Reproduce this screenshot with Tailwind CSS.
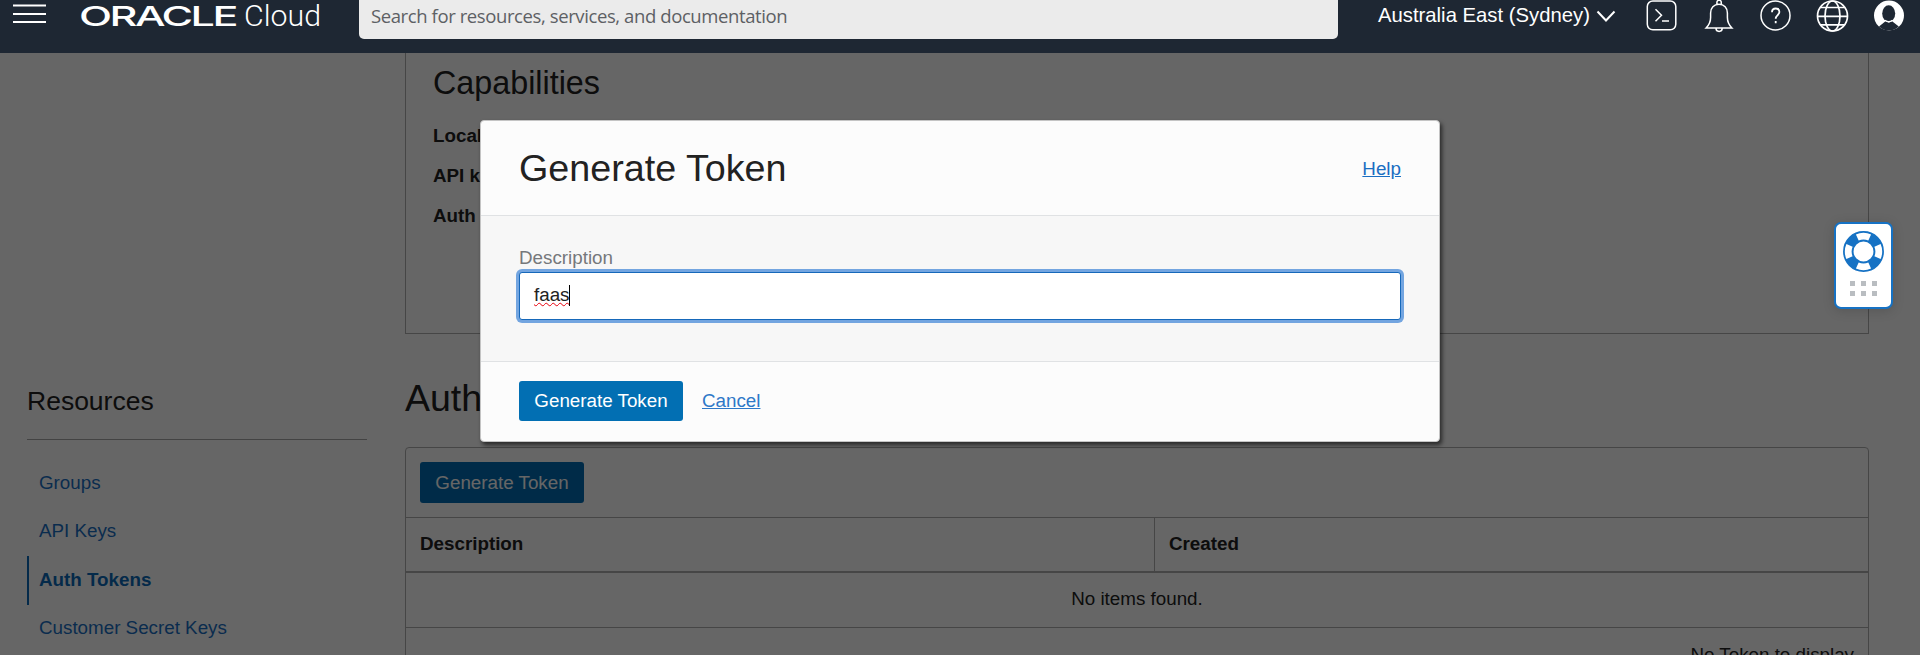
<!DOCTYPE html>
<html lang="en">
<head>
<meta charset="utf-8">
<title>Oracle Cloud</title>
<script src="https://cdn.jsdelivr.net/npm/@tailwindcss/browser@4"></script>
</head>
<body class="relative h-[655px] overflow-hidden bg-white font-['Liberation_Sans',Arial,sans-serif] text-[18.8px] text-[#222] whitespace-nowrap">

<header class="relative z-20 flex h-[53px] bg-[#1e2733] text-white">
  <svg class="mt-[4px] ml-[13px] h-[20px] w-[33px]" viewBox="0 0 33 20" stroke="#fff" stroke-width="1.8"><path d="M0 1.5h33M0 10h33M0 18h33"/></svg>
  <svg class="ml-[34px] h-[32px] w-[242px]" viewBox="0 0 242 32" fill="#fff">
    <text x="-1" y="25.500" font-family="Inter, sans-serif" font-weight="500" font-size="27.500" letter-spacing="-1.6" textLength="157" lengthAdjust="spacingAndGlyphs">ORACLE</text>
    <text x="164" y="25.500" font-family="Roboto, sans-serif" font-weight="300" font-size="29" textLength="77" lengthAdjust="spacingAndGlyphs">Cloud</text>
  </svg>
  <div class="ml-[37px] h-[39px] w-[979px] rounded-b-[5px] bg-[#ebebeb] pl-[12px] font-['Open_Sans',sans-serif] text-[18.5px] leading-[32px] tracking-[-0.4px] text-[#5d6064]">Search for resources, services, and documentation</div>
  <div class="ml-[40px] flex w-[238px] items-start text-[20.3px] leading-[31px]">
    <span class="w-[218px]">Australia East (Sydney)</span>
    <svg class="mt-[10px] h-[13px] w-[20px]" viewBox="0 0 20 13" fill="none" stroke="#fff" stroke-width="2"><path d="M1.500 1.500l8.500 9 8.500-9"/></svg>
  </div>
  <svg class="ml-[30px] h-[33px] w-[32px]" viewBox="0 0 32 33" fill="none" stroke="#fff" stroke-width="1.500"><rect x="1.300" y="1" width="28.500" height="28.800" rx="5.500"/><path d="M9.500 9.300l6 6-6 6M16 21h7"/></svg>
  <svg class="ml-[26px] h-[33px] w-[30px]" viewBox="0 0 30 33" fill="none" stroke="#fff" stroke-width="1.500"><path d="M12.900 4.300V2.500a2.200 2.200 0 0 1 4.400 0v1.800M2.100 28h25.800c-3.200-3.200-4.500-6.500-4.500-10.500v-4.500c0-5-3.200-8.700-8.400-8.700s-8.400 3.700-8.400 8.700v4.500c0 4-1.300 7.300-4.500 10.500zM12 28.300a3 3 0 0 0 6.200 0"/></svg>
  <svg class="ml-[26px] h-[33px] w-[32px]" viewBox="0 0 32 33" fill="none" stroke="#fff" stroke-width="1.500"><circle cx="15.500" cy="15.500" r="14.500"/><path stroke-width="1.800" d="M12 12.200c0-2.300 1.600-3.700 3.700-3.700s3.700 1.400 3.700 3.500c0 3-3.700 3.200-3.700 6.700M15.700 21v2.200"/></svg>
  <svg class="ml-[24px] h-[33px] w-[34px]" viewBox="0 0 34 33" fill="none" stroke="#fff" stroke-width="1.700"><circle cx="16.500" cy="16" r="15"/><ellipse cx="16.500" cy="16" rx="7.500" ry="15"/><path d="M1.500 16.300h30M4.500 7.500h24M4.500 24.800h24"/></svg>
  <svg class="ml-[24px] h-[33px] w-[30px]" viewBox="0 0 30 33"><circle cx="15" cy="15.500" r="15" fill="#fff"/><ellipse cx="14.700" cy="13.500" rx="6.500" ry="8.200" fill="#1e2733"/><path d="M5 26.500l6.500-5.200 3.300 1.500 3.300-1.500 6.700 5.200a14.200 14.200 0 0 1-19.800 0z" fill="#1e2733"/><path d="M11 20.200c2.500 2 5 2 7.500 0" fill="none" stroke="#fff" stroke-width="1.200"/></svg>
</header>

<main class="flex h-[602px] overflow-hidden">
  <nav class="ml-[27px] w-[340px] shrink-0 pt-[328px]">
    <h2 class="border-b border-[#a8a8a8] pb-[18px] text-[26.5px] leading-[40px]">Resources</h2>
    <ul class="mt-[19px] leading-[46px] text-[#1a6fc4]">
      <li class="h-[48.500px] pl-[12px] leading-[47px]">Groups</li>
      <li class="h-[48.500px] pl-[12px]">API Keys</li>
      <li class="h-[48.500px] border-l-2 border-[#0a6ab8] pl-[10px] font-bold leading-[47px] text-[#0a6ab8]">Auth Tokens</li>
      <li class="h-[48.500px] pl-[12px]">Customer Secret Keys</li>
    </ul>
  </nav>
  <div class="ml-[38px] w-[1464px] shrink-0">
    <section class="h-[281px] border-x border-b border-[#b0b0b0] pt-[10px] pl-[27px]">
      <h2 class="text-[32.300px] leading-[41px]">Capabilities</h2>
      <div class="mt-[12px] font-bold leading-[39px]">
        <p class="h-[40px]">Local password:</p>
        <p class="h-[40px]">API keys:</p>
        <p class="h-[40px]">Auth tokens:</p>
      </div>
    </section>
    <h1 class="mt-[40px] text-[37.500px] leading-[48px]">Auth Tokens</h1>
    <section class="mt-[25px] h-[260px] rounded-[4px] border border-[#b0b0b0]">
      <div class="h-[70px] border-b border-[#b0b0b0] pt-[14px] pl-[14px]">
        <button class="block h-[41px] w-[164px] rounded-[3px] bg-[#006cb3] pt-px text-white">Generate Token</button>
      </div>
      <div class="flex h-[55px] border-b-2 border-[#b0b0b0] font-bold leading-[51px]">
        <div class="w-[749px] border-r border-[#b0b0b0] pl-[14px]">Description</div>
        <div class="pl-[14px]">Created</div>
      </div>
      <div class="h-[55px] border-b border-[#b0b0b0] text-center leading-[51px]">No items found.</div>
      <div class="pr-[14px] text-right leading-[53px]">No Token to display</div>
    </section>
  </div>
</main>

<div class="absolute inset-0 z-10 flex justify-center bg-black/60 pt-[120px]">
  <div role="dialog" class="flex h-[322px] w-[960px] flex-col rounded-[4px] border border-[#c4c4c4] bg-[#fcfcfc] shadow-[2px_3px_4px_rgba(0,0,0,0.6)]">
    <div class="flex h-[95px] items-center justify-between border-b border-[#e0e2e4] px-[38px]">
      <h2 class="text-[37.700px] leading-[48px]">Generate Token</h2>
      <a class="pt-[2px] text-[#1b6ec2] underline underline-offset-1">Help</a>
    </div>
    <div class="h-[146px] border-b border-[#e0e2e4] bg-[#f7f7f7] px-[38px] pt-[30px]">
      <label class="block h-[26px] leading-[24px] text-[#75787b]">Description</label>
      <div class="flex h-[48px] items-center rounded-[3px] border border-[#1668ba] bg-white pb-[2px] pl-[14px] ring-3 ring-[#73a5e0]">
        <span class="underline decoration-red-600 decoration-wavy decoration-1 underline-offset-1">faas</span><i class="-ml-px h-[21px] w-px bg-black"></i>
      </div>
    </div>
    <div class="flex flex-1 items-start px-[38px] pt-[19px]">
      <button class="h-[40px] w-[164px] rounded-[3px] bg-[#026fb3] text-white">Generate Token</button>
      <a class="ml-[19px] leading-[40px] text-[#2e78c8] underline underline-offset-1">Cancel</a>
    </div>
  </div>
</div>

<!-- Floating support widget -->
<div class="absolute top-[222px] left-[1834px] z-20 flex h-[87px] w-[59px] flex-col items-center rounded-[7px] border-2 border-[#1672c4] bg-white pt-[6px] shadow-[0_2px_12px_rgba(0,0,0,0.15)]">
  <svg class="h-[43px] w-[43px]" viewBox="0 0 43 43" fill="none"><circle cx="21.500" cy="21.500" r="15.200" stroke="#1672c4" stroke-width="10.500"/><circle cx="21.500" cy="21.500" r="15.300" stroke="#fff" stroke-width="6.800" pathLength="360" stroke-dasharray="48 42" stroke-dashoffset="24"/></svg>
  <div class="mt-[8px] grid grid-cols-3 gap-x-[6px] gap-y-[5px]">
    <i class="size-[5px] bg-[#b9bdc1]"></i><i class="size-[5px] bg-[#b9bdc1]"></i><i class="size-[5px] bg-[#b9bdc1]"></i>
    <i class="size-[5px] bg-[#b9bdc1]"></i><i class="size-[5px] bg-[#b9bdc1]"></i><i class="size-[5px] bg-[#b9bdc1]"></i>
  </div>
</div>
</body>
</html>
